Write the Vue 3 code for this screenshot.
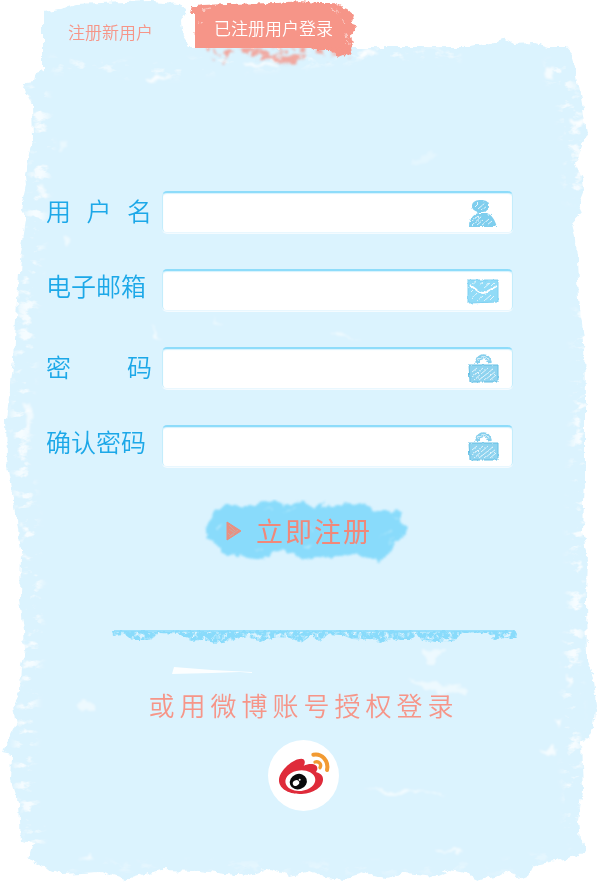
<script setup>
import { reactive } from 'vue'

const fields = [
  { id: 'username', label: '用 户 名', type: 'text', icon: 'user', spread: true },
  { id: 'email', label: '电子邮箱', type: 'email', icon: 'mail' },
  { id: 'password', label: '密 码', type: 'password', icon: 'lock', spread: true },
  { id: 'confirm', label: '确认密码', type: 'password', icon: 'lock' }
]
const form = reactive({ username: '', email: '', password: '', confirm: '' })
</script>

<template>
  <main class="page">
    <svg class="paper" viewBox="0 0 599 883" preserveAspectRatio="none" aria-hidden="true">
      <defs>
        <filter id="torn" x="-5%" y="-5%" width="110%" height="110%" color-interpolation-filters="sRGB">
          <feTurbulence type="fractalNoise" baseFrequency="0.11" numOctaves="3" seed="4" />
          <feDisplacementMap in="SourceGraphic" scale="8" xChannelSelector="R" yChannelSelector="G" />
          <feGaussianBlur stdDeviation="0.7" />
        </filter>
        <filter id="flecks" x="-5%" y="-5%" width="110%" height="110%" color-interpolation-filters="sRGB">
          <feGaussianBlur in="SourceAlpha" stdDeviation="4" result="band" />
          <feTurbulence type="fractalNoise" baseFrequency="0.06 0.1" numOctaves="4" seed="11" />
          <feColorMatrix values="0 0 0 0 1  0 0 0 0 1  0 0 0 0 1  6 0 0 0 -3.3" />
          <feComposite in2="band" operator="in" />
          <feGaussianBlur stdDeviation="0.6" />
        </filter>
        <filter id="soft" x="-20%" y="-50%" width="140%" height="200%" color-interpolation-filters="sRGB">
          <feTurbulence type="fractalNoise" baseFrequency="0.08" numOctaves="3" seed="7" />
          <feDisplacementMap in="SourceGraphic" scale="12" xChannelSelector="R" yChannelSelector="G" />
          <feGaussianBlur stdDeviation="1.2" />
        </filter>
      </defs>
      <path
        filter="url(#torn)"
        fill="#dbf3fe"
        d="M43 12L60 9L75 4L100 3L150 1L180 3L186 12L181 21L183 38L189 47L470 47L490 43L503 39L512 44L535 43L548 47L565 47L572 55L577 75L584 115L587 134L582 145L575 163L583 180L584 190L578 205L582 213L572 224L576 240L579 300L584 340L585 400L585 480L583 530L587 550L586 600L587 660L594 680L597 705L594 725L588 738L581 742L583 790L578 820L580 840L586 850L580 855L560 860L535 865L530 875L515 878L510 870L500 876L480 880L465 873L450 870L435 876L405 873L385 878L365 873L345 879L325 877L310 871L290 876L270 869L250 876L225 874L200 871L160 870L125 880L100 872L62 874L40 865L28 860L33 842L21 840L19 805L11 780L12 755L2 753L16 725L13 705L21 690L22 665L25 650L24 630L20 600L21 550L14 500L7 460L6 420L14 360L17 300L20 260L26 220L20 210L26 185L25 175L30 150L33 139L32 105L25 90L26 83L33 82L34 75L43 72Z"
      />
      <g filter="url(#flecks)" fill="none" stroke="#fff" stroke-linejoin="round">
        <path opacity=".75" stroke-width="18" d="M36 85L42 150L34 230L28 300L24 370L20 430L25 500L32 560L32 640L26 710L24 780L36 846" />
        <path opacity=".4" stroke-width="8" d="M60 866L120 868L200 865L300 868L400 868L500 868L570 850" />
        <path opacity=".7" stroke-width="22" d="M552 62L570 100L574 140L576 200" />
        <path opacity=".8" stroke-width="16" d="M582 310L581 420L578 530L577 600L572 680L572 760L575 830" />
        <path opacity=".6" stroke-width="12" d="M50 64L110 68L160 72L200 66L300 60L370 54L460 54" />
      </g>
      <g filter="url(#soft)" fill="#fff">
        <path opacity=".8" d="M143 80L168 76L160 82L146 83Z" />
        <path opacity=".7" d="M240 64L270 62L280 66L244 67Z" />
        <path opacity=".8" d="M362 51L380 51L372 57L360 58Z" />
        <path opacity=".7" d="M545 68L555 70L552 80L544 76Z" />
        <path opacity=".9" d="M569 121L584 118L584 123L571 125Z" />
        <path opacity=".4" d="M59 140L68 139L68 149L60 150Z" />
        <path opacity=".25" d="M412 158L436 152L428 162L412 167Z" />
        <path opacity=".5" d="M64 235L72 237L70 247L64 245Z" />
        <path opacity=".6" d="M37 185L45 184L46 200L39 192Z" />
        <path opacity=".6" d="M153 323L158 336L160 340L154 338Z" />
        <path opacity=".5" d="M210 317L223 325L214 322Z" />
        <path opacity=".5" d="M330 328L365 345L340 337Z" />
        <path opacity=".6" d="M25 405L31 400L32 436L27 426Z" />
        <path opacity=".5" d="M420 650L445 649L432 664L420 656ZM410 677L440 684L465 688L464 694L425 690Z" />
        <path opacity=".5" d="M72 703L92 700L97 712L78 708Z" />
        <path opacity=".7" d="M539 750L556 746L555 757L547 756Z" />
        <path opacity=".8" d="M566 674L573 678L568 686ZM553 718L562 720L558 725Z" />
        <path opacity=".6" d="M433 850L464 850L460 853L436 853ZM80 858L92 852L92 859Z" />
        <path opacity=".6" d="M365 788L390 790L450 794L390 794Z" />
      </g>
      <path fill="#fff" opacity=".9" d="M174 667L212 670L252 672L252 673L240 672L212 673L172 674Z" />
    </svg>

    <nav class="tabs">
      <a class="tab" href="#register">注册新用户</a>
      <a class="tab tab-login" href="#login">
        <svg class="tab-paint" viewBox="0 0 175 70" preserveAspectRatio="none" aria-hidden="true">
          <defs>
            <filter id="crayon" x="-5%" y="-10%" width="110%" height="120%" color-interpolation-filters="sRGB">
              <feTurbulence type="fractalNoise" baseFrequency="0.2" numOctaves="3" seed="8" result="n" />
              <feDisplacementMap in="SourceGraphic" in2="n" scale="6" xChannelSelector="R" yChannelSelector="G" />
              <feGaussianBlur stdDeviation="0.5" />
            </filter>
            <filter id="smudge" x="-5%" y="-20%" width="110%" height="140%" color-interpolation-filters="sRGB">
              <feTurbulence type="fractalNoise" baseFrequency="0.11" numOctaves="3" seed="5" />
              <feColorMatrix values="0 0 0 0 0  0 0 0 0 0  0 0 0 0 0  7 0 0 0 -3.2" result="holes" />
              <feComposite in="SourceGraphic" in2="holes" operator="in" />
              <feGaussianBlur stdDeviation="0.8" />
            </filter>
          </defs>
          <path filter="url(#crayon)" fill="#f69588" d="M7 13L2 13L4 7L14 5L40 4L90 3L112 1L130 3L145 3L158 8L166 15L164 22L168 28L163 35L165 44L162 48L164 56L157 54L150 57L143 50L126 50L118 44L8 44Z" />
          <path fill="#f69588" d="M7 14L150 14L150 48L7 48Z" />
          <path filter="url(#smudge)" fill="#f69588" opacity=".8" d="M18 48L55 48L112 47L158 50L164 58L148 60L140 63L135 54L120 52L113 64L90 66L84 58L66 62L58 53L42 52L36 65L24 60Z" />
          <g filter="url(#crayon)" fill="none" stroke="#fff" stroke-width="1" opacity=".5">
            <path d="M14 10L22 8M142 8L150 14M153 18L158 24M158 32L160 38M10 23L14 24M148 10L153 13M158 42L162 45" />
          </g>
        </svg>
        <span class="tab-text">已注册用户登录</span>
      </a>
    </nav>

    <form class="form" @submit.prevent>
      <div v-for="f in fields" :key="f.id" class="row">
        <label class="label" :class="{ spread: f.spread }" :for="f.id">{{ f.label }}</label>
        <div class="field">
          <input :id="f.id" v-model="form[f.id]" class="input" :type="f.type" />
          <svg class="icon" viewBox="0 0 32 30" aria-hidden="true">
            <defs>
              <filter :id="'sketch-' + f.id" x="-10%" y="-10%" width="120%" height="120%" color-interpolation-filters="sRGB">
                <feTurbulence type="fractalNoise" baseFrequency="0.3" numOctaves="2" seed="3" />
                <feDisplacementMap in="SourceGraphic" scale="3" xChannelSelector="R" yChannelSelector="G" />
                <feGaussianBlur stdDeviation="0.3" />
              </filter>
            </defs>
            <g v-if="f.icon === 'user'" :filter="`url(#sketch-${f.id})`">
              <path fill="#7fceee" d="M5 8C5 3 10 2 14 2C19 2 22 4 22 8C22 12 19 14 14 14C9 14 5 12 5 8ZM2 29C2 22 6 16 12 15L20 15C25 17 28 22 30 29Z" />
              <path class="hatch" d="M8 9L12 5M11 11L18 5M15 12L20 8M5 23L11 18M5 27L15 18M10 27L16 22M14 28L22 21M20 27L25 23" />
            </g>
            <g v-else-if="f.icon === 'mail'" :filter="`url(#sketch-${f.id})`">
              <path fill="#91dbf7" d="M1 4L31 4L31 26L1 27Z" />
              <path fill="none" stroke="#fff" stroke-width="2" d="M3 9L11 15Q16 19 21 15L30 10" />
              <path class="hatch" d="M5 23L10 17M10 25L16 20M4 16L6 14M17 25L24 19M23 24L28 19M12 9L16 6M17 12L23 7M6 8L9 6M24 10L28 6" />
              <path fill="none" stroke="#7fd0f1" d="M1 4L31 4L31 26L1 27Z" />
            </g>
            <g v-else :filter="`url(#sketch-${f.id})`">
              <path fill="none" stroke="#86cfed" stroke-width="4" d="M10 9C12 0 21 0 23 9" />
              <path fill="none" stroke="#d8f1fb" stroke-width="1" d="M11 7C13 1 20 1 22 7" />
              <path fill="#8fd3ef" d="M2 11L31 11L31 28L3 28Z" />
              <path class="hatch" d="M5 18L10 14M5 23L16 14M7 26L21 14M12 26L26 15M18 26L29 17M23 26L29 21" />
              <path fill="none" stroke="#65bfe4" d="M2 11L31 11L31 28L3 28Z" />
            </g>
          </svg>
        </div>
      </div>

      <div class="actions">
        <button class="submit" type="submit">
          <svg class="submit-paint" viewBox="0 0 206 66" preserveAspectRatio="none" aria-hidden="true">
            <defs>
              <filter id="splash" x="-5%" y="-10%" width="110%" height="120%" color-interpolation-filters="sRGB">
                <feTurbulence type="fractalNoise" baseFrequency="0.14" numOctaves="3" seed="14" />
                <feDisplacementMap in="SourceGraphic" scale="8" xChannelSelector="R" yChannelSelector="G" />
                <feGaussianBlur stdDeviation="0.8" />
              </filter>
            </defs>
            <g filter="url(#splash)">
              <path fill="#89dbfb" d="M1 33L3 25L10 21L11 12L24 5L42 8L62 4L74 1L80 6L100 3L110 9L122 2L118 9L135 6L160 4L172 12L188 12L199 13L197 23L205 29L199 38L192 42L186 52L178 62L165 60L150 54L132 59L110 58L100 59L82 52L68 54L62 61L45 59L20 54L10 43Z" />
              <path fill="none" stroke="#bcebfd" stroke-width="1" d="M150 43L153 46M62 10L70 8M190 17L196 20M177 37L188 31M98 46L108 49M50 50L60 53M12 32L18 26M185 46L192 38M104 24L110 34M80 12L92 9" />
            </g>
          </svg>
          <svg class="arrow" viewBox="0 0 16 22" aria-hidden="true">
            <path fill="#e98f80" stroke="#e98f80" stroke-linejoin="round" d="M1 2L15 11L1 20Z" />
            <path fill="none" stroke="#c9a9a2" stroke-width="1" d="M3 5L9 11M3 9L9 13M5 15L12 10M3 17L8 14M2 13L5 16" />
          </svg>
          <span class="submit-text">立即注册</span>
        </button>
      </div>
    </form>

    <svg class="divider" viewBox="0 0 405 16" preserveAspectRatio="none" aria-hidden="true">
      <defs>
        <filter id="chalk" x="-2%" y="-20%" width="104%" height="140%" color-interpolation-filters="sRGB">
          <feTurbulence type="fractalNoise" baseFrequency="0.22" numOctaves="2" seed="21" result="n" />
          <feColorMatrix in="n" values="0 0 0 0 0  0 0 0 0 0  0 0 0 0 0  5 0 0 0 -1.6" result="grain" />
          <feComposite in="SourceGraphic" in2="grain" operator="in" result="grainy" />
          <feDisplacementMap in="grainy" in2="n" scale="4" xChannelSelector="R" yChannelSelector="G" />
          <feGaussianBlur stdDeviation="0.6" />
        </filter>
      </defs>
      <path filter="url(#chalk)" fill="#89dbfb" d="M0 2L405 2L405 9L392 9L383 11L376 4L350 4L342 12L325 13L310 12L305 4L298 11L278 11L268 14L258 11L240 10L230 6L216 5L208 13L200 6L189 14L178 9L165 8L148 13L135 7L118 12L103 14L90 11L78 12L70 5L46 4L40 11L20 11L12 5L1 6Z" />
      <path fill="none" stroke="#89dbfb" stroke-width="2" opacity=".8" d="M2 2L403 2" />
    </svg>

    <section class="social">
      <h2 class="social-title">或用微博账号授权登录</h2>
      <a class="weibo" href="#weibo" aria-label="微博">
        <svg class="weibo-logo" viewBox="0 0 213 213" aria-hidden="true">
          <path fill="#df2b3a" d="M33 118C36 90 75 56 100 56C110 56 114 66 107 77C125 69 150 70 148 88C147 92 143 95 145 97C160 100 166 110 165 120C163 145 130 162 95 162C60 162 31 145 33 118Z" />
          <ellipse cx="97" cy="122" rx="45" ry="31" fill="#fff" transform="rotate(-6 97 122)" />
          <ellipse cx="91" cy="125" rx="26" ry="23" fill="#0a090b" transform="rotate(-20 91 125)" />
          <ellipse cx="84" cy="129" rx="10" ry="8" fill="#fff" transform="rotate(-25 84 129)" />
          <circle cx="95" cy="119" r="3" fill="#fff" />
          <g fill="none" stroke="#f29a32" stroke-linecap="round">
            <path stroke-width="12" d="M136 44C162 39 183 63 177 90" />
            <path stroke-width="10" d="M141 66C153 63 162 72 156 83" />
          </g>
        </svg>
      </a>
    </section>
  </main>
</template>

<style>
body {
  margin: 0;
  background: #fff;
}
</style>

<style scoped>
.page {
  position: relative;
  font-family: "Noto Sans CJK SC", "Noto Sans", sans-serif;
  font-weight: 350;
  padding-bottom: 72px;
}
.paper {
  position: absolute;
  inset: 0;
  width: 100%;
  height: 100%;
}
.tabs {
  position: relative;
  display: flex;
  padding-left: 44px;
}
.tab {
  box-sizing: border-box;
  width: 144px;
  height: 48px;
  padding: 20px 0 0 24px;
  font-size: 17px;
  line-height: 24px;
  color: #f69588;
  text-decoration: none;
  white-space: nowrap;
}
.tab-login {
  position: relative;
  width: 175px;
  padding: 16px 0 0 26px;
  color: #fff;
}
.tab-paint {
  position: absolute;
  top: 0;
  left: 0;
  width: 100%;
  height: 70px;
}
.tab-text {
  position: relative;
}
.form {
  position: relative;
  display: flex;
  flex-direction: column;
  gap: 36px;
  padding-top: 143px;
}
.row {
  display: flex;
  align-items: center;
  gap: 10px;
  padding: 0 86px 0 46px;
}
.label {
  width: 106px;
  padding-bottom: 10px;
  font-size: 25px;
  line-height: 32px;
  color: #1ca8e8;
  white-space: nowrap;
}
.spread {
  padding-bottom: 4px;
  text-align-last: justify;
}
.field {
  flex: 1;
  display: flex;
  align-items: center;
  box-sizing: border-box;
  height: 42px;
  min-width: 0;
  padding-right: 13px;
  background: #fff;
  border: 1px solid #c4edfc;
  border-top: 2px solid #8edcfa;
  border-bottom-color: #e9f7fe;
  border-radius: 5px;
  box-shadow: inset 0 1px 1px #d5f2fd, 0 1px 0 #f4fbff;
}
.input {
  flex: 1;
  min-width: 0;
  height: 36px;
  padding: 0 12px;
  border: 0;
  outline: 0;
  background: transparent;
  font: inherit;
  font-size: 18px;
  color: #1ca8e8;
}
.icon {
  width: 32px;
  height: 30px;
}
.hatch {
  fill: none;
  stroke: #e4f5fc;
  stroke-width: 1;
}
.actions {
  display: flex;
  justify-content: center;
  padding-left: 13px;
  margin-top: -4px;
}
.submit {
  position: relative;
  display: flex;
  align-items: center;
  gap: 14px;
  width: 206px;
  height: 66px;
  padding: 0 0 2px 23px;
  border: 0;
  background: transparent;
  font: inherit;
  font-weight: 400;
  color: #f0887a;
  cursor: pointer;
}
.submit-paint {
  position: absolute;
  inset: 0;
  width: 100%;
  height: 100%;
}
.arrow {
  position: relative;
  width: 16px;
  height: 22px;
}
.submit-text {
  position: relative;
  font-size: 27px;
  line-height: 40px;
  letter-spacing: 2px;
}
.divider {
  position: relative;
  display: block;
  box-sizing: border-box;
  width: 100%;
  height: 16px;
  margin-top: 64px;
  padding: 0 82px 0 112px;
}
.social {
  position: relative;
  display: flex;
  flex-direction: column;
  align-items: center;
  gap: 15px;
  padding: 40px 0 0 8px;
}
.social-title {
  margin: 0;
  font-size: 26px;
  font-weight: 350;
  line-height: 40px;
  letter-spacing: 5px;
  color: #f69588;
}
.weibo {
  width: 71px;
  height: 71px;
  border-radius: 50%;
  background: #fff;
}
.weibo-logo {
  display: block;
  width: 100%;
  height: 100%;
}
</style>
